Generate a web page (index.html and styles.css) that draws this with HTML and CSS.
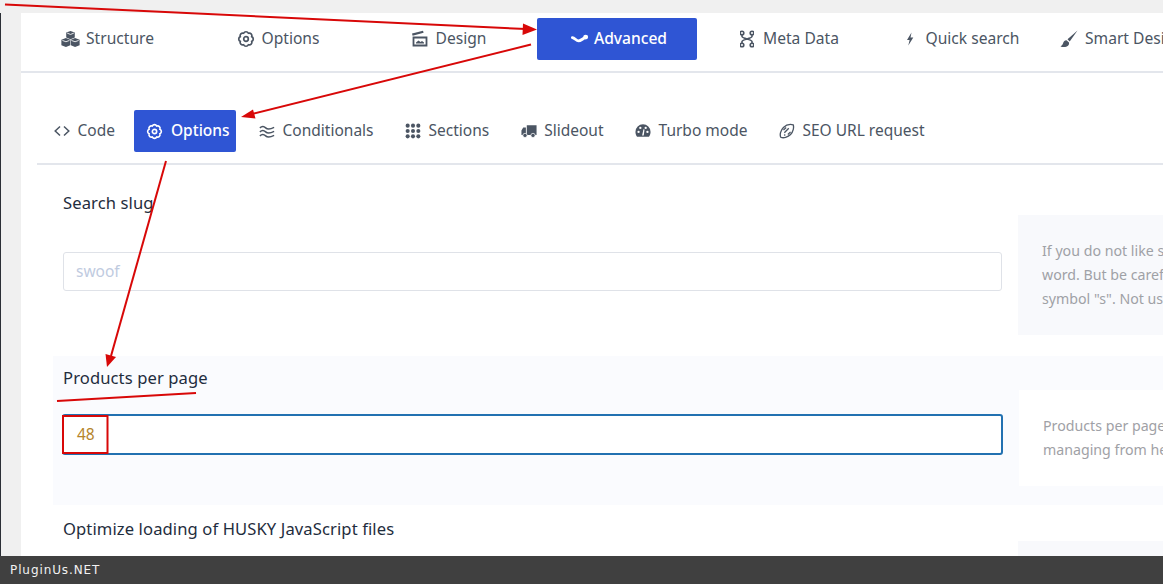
FILE: index.html
```html
<!DOCTYPE html>
<html lang="en">
<head>
<meta charset="utf-8">
<title>HUSKY options</title>
<link rel="stylesheet" href="styles.css">
</head>
<body>
<svg class="defs" width="0" height="0" aria-hidden="true">
  <symbol id="i-gear" viewBox="0 0 18 18">
    <path d="M14.730 6.630A2.600 2.600 0 0 1 14.730 11.370A2.600 2.600 0 0 1 11.370 14.730A2.600 2.600 0 0 1 6.630 14.730A2.600 2.600 0 0 1 3.270 11.370A2.600 2.600 0 0 1 3.270 6.630A2.600 2.600 0 0 1 6.630 3.270A2.600 2.600 0 0 1 11.370 3.270A2.600 2.600 0 0 1 14.730 6.630z" fill="none" stroke="currentColor" stroke-width="1.700"/>
    <circle cx="9" cy="9" r="2.300" fill="none" stroke="currentColor" stroke-width="1.700"/>
  </symbol>
</svg>

<div class="stage">
  <div class="strip"></div>
  <main class="panel">
    <nav class="tabs">
      <a class="tab">
        <svg class="ico ico-wide" viewBox="0 0 20 18"><path fill="currentColor" d="M10 .5l4.500 1.700v5.300L10 9.200 5.500 7.500V2.200zM5.200 8l4.600 1.800v5.900L5.200 17.500.4 15.700V9.800zM14.800 8l4.800 1.800v5.900l-4.800 1.800-4.400-1.800V9.800z"/><path fill="none" stroke="#fff" stroke-width=".9" d="M6.500 2.800l3.500 1.400 3.500-1.400M1.500 10.500l3.700 1.400 3.700-1.400M11 10.500l3.800 1.400 3.800-1.400"/></svg>
        <span class="tab-text tight">Structure</span>
      </a>
      <a class="tab"><svg class="ico"><use href="#i-gear"/></svg><span class="tab-text">Options</span></a>
      <a class="tab">
        <svg class="ico" viewBox="0 0 18 18"><path fill="none" stroke="currentColor" stroke-width="1.800" d="M2.500 7.500h13v8h-13z"/><path fill="currentColor" d="M1 3.500L12 .8l.6 2L1.600 5.800zM5 10h8v3.500H5z"/><path fill="#fff" d="M5 12.500l2.500-2 2 1.500 1.500-1 2 1.500V10H5z"/></svg>
        <span class="tab-text">Design</span>
      </a>
      <a class="tab active">
        <svg class="ico ico-wide" viewBox="0 0 20 18"><path fill="none" stroke="currentColor" stroke-width="3" stroke-linecap="round" d="M2.500 7.500c2.500.3 4 3.500 6.500 3.500 2 0 4-2 6-3"/><circle cx="16.500" cy="7" r="2.600" fill="currentColor"/></svg>
        <span class="tab-text tight">Advanced</span>
      </a>
      <a class="tab">
        <svg class="ico ico-narrow" viewBox="2 0 14 18"><g fill="none" stroke="currentColor" stroke-width="1.600"><circle cx="4" cy="3" r="1.800"/><circle cx="14" cy="3" r="1.800"/><circle cx="4" cy="15" r="1.800"/><circle cx="14" cy="15" r="1.800"/><path d="M4 5v1.500c0 2 10 3 10 5V13M14 5v1.500c0 2-10 3-10 5V13"/></g></svg>
        <span class="tab-text">Meta Data</span>
      </a>
      <a class="tab">
        <svg class="ico" viewBox="0 0 18 18"><path fill="currentColor" d="M10.500 2.500L6 10h2.600L7.300 15.500 12.300 7.500H9.500z"/></svg>
        <span class="tab-text">Quick search</span>
      </a>
      <a class="tab tab-last">
        <svg class="ico" viewBox="0 0 18 18"><path fill="currentColor" d="M17.500 .5L7.500 9.300l2.200 2.200zM6.500 10.200c-2.200.2-3 1.600-3.500 3.300-.3 1.100-1.200 2-2.500 3 2.500 1 6 .8 7.500-.8 1-1 1.200-2.100 1-3.200z"/></svg>
        <span class="tab-text">Smart Design</span>
      </a>
    </nav>

    <nav class="subtabs">
      <a class="subtab">
        <svg class="ico" viewBox="0 1 16 16"><path fill="none" stroke="currentColor" stroke-width="1.500" d="M6 4.500L1.200 9 6 13.500M10 4.500L14.800 9 10 13.500"/></svg>
        <span class="tab-text">Code</span>
      </a>
      <a class="subtab active"><svg class="ico"><use href="#i-gear"/></svg><span class="tab-text">Options</span></a>
      <a class="subtab">
        <svg class="ico" viewBox="0 0 18 18"><path fill="none" stroke="currentColor" stroke-width="1.700" d="M1 5.500c2.500-2.500 4.500-2 6.500 0s4.500 2 9.500-.5M1 10c2.500-2.500 4.500-2 6.500 0s4.500 2 9.500-.5M1 14.500c2.500-2.500 4.500-2 6.500 0s4.500 2 9.500-.5"/></svg>
        <span class="tab-text">Conditionals</span>
      </a>
      <a class="subtab">
        <svg class="ico" viewBox="0 0 18 18"><g fill="currentColor"><circle cx="3" cy="3" r="2.300"/><circle cx="9" cy="3" r="2.300"/><circle cx="15" cy="3" r="2.300"/><circle cx="3" cy="9" r="2.300"/><circle cx="9" cy="9" r="2.300"/><circle cx="15" cy="9" r="2.300"/><circle cx="3" cy="15" r="2.300"/><circle cx="9" cy="15" r="2.300"/><circle cx="15" cy="15" r="2.300"/></g></svg>
        <span class="tab-text">Sections</span>
      </a>
      <a class="subtab">
        <svg class="ico" viewBox="0 0 18 18"><path fill="currentColor" d="M6.500 2.500H17.500v11H6.500zM.5 8.500l2-3.500h3v8.500h-5z"/><g fill="currentColor" stroke="#fff" stroke-width=".8"><circle cx="4.500" cy="14" r="2.400"/><circle cx="13.500" cy="14" r="2.400"/></g></svg>
        <span class="tab-text">Slideout</span>
      </a>
      <a class="subtab">
        <svg class="ico" viewBox="0 0 18 18"><path fill="currentColor" d="M9 1.500a8.500 8.500 0 0 0-8.500 8.500c0 2 .7 3.800 1.800 5.500h13.400c1.100-1.700 1.800-3.500 1.800-5.500A8.500 8.500 0 0 0 9 1.500z"/><g fill="#fff"><circle cx="4" cy="10" r="1.300"/><circle cx="6" cy="5.500" r="1.300"/><circle cx="12" cy="5.500" r="1.300"/><circle cx="14" cy="10" r="1.300"/><path d="M8 14l1.500-7 1.200.3-.9 6.700z"/></g></svg>
        <span class="tab-text">Turbo mode</span>
      </a>
      <a class="subtab">
        <svg class="ico" viewBox="0 0 18 18"><g fill="none" stroke="currentColor" stroke-width="1.500"><path d="M2 16c-1.500-3 0-8 3-11s7-4 11-3c1 3 0 8-3 11s-8 4.500-11 3z"/><path d="M6 11l5-5M5 8l3-3M10 13l3-3M6 14l1-1"/></g></svg>
        <span class="tab-text">SEO URL request</span>
      </a>
    </nav>

    <section class="row row-slug">
      <div class="field">
        <label class="label">Search slug</label>
        <div class="input plain"><span class="placeholder">swoof</span></div>
      </div>
      <aside class="info info-slug">If you do not like search key 'swoof' you can change it here to any<br>word. But be careful: the word should not contain the<br>symbol "s". Not use underscore</aside>
    </section>

    <section class="row row-hl">
      <div class="field">
        <label class="label">Products per page</label>
        <div class="input focus"><span class="value">48</span></div>
      </div>
      <aside class="info info-pp">Products per page when searching is going only. Leave it empty for<br>managing from here</aside>
    </section>

    <section class="row row-last">
      <div class="field">
        <label class="label">Optimize loading of HUSKY JavaScript files</label>
      </div>
      <aside class="info info-last"></aside>
    </section>
  </main>

  <svg class="marks" viewBox="0 0 1163 556" aria-hidden="true">
    <g fill="none" stroke="#d80808" stroke-width="2">
      <path d="M5 4.500L526 29"/>
      <path d="M531 44.500L250 114.500"/>
      <path d="M166 161L111 356"/>
      <path d="M57 401L196 393"/>
      <rect x="63" y="416" width="44.500" height="37"/>
    </g>
    <g fill="#d80808">
      <path d="M537 29.500L523 23.500 522.500 35z"/>
      <path d="M241 117L253 109.500 255.500 118.500z"/>
      <path d="M107 367L105.500 354 116 357z"/>
    </g>
  </svg>
</div>

<footer class="footer">PluginUs.NET</footer>
</body>
</html>
```

FILE: styles.css
```css
* { box-sizing: border-box; }

html, body {
  margin: 0;
  height: 584px;
  overflow: hidden;
}

body {
  display: flex;
  flex-direction: column;
  font-family: "Noto Sans", "Open Sans", sans-serif;
  font-size: 15.500px;
  background: #f0f0f0;
}

.defs { position: absolute; }

.stage {
  position: relative;
  display: flex;
  height: 556px;
  overflow: hidden;
  padding-top: 13px;
}

.strip {
  flex: 0 0 21px;
  border-left: 1px solid #2b2f36;
}

.panel {
  flex: 0 0 1600px;
  background: #fff;
}

.marks {
  position: absolute;
  inset: 0;
  width: 1163px;
  height: 556px;
  pointer-events: none;
}

.tabs {
  display: flex;
  gap: 10.500px;
  height: 60px;
  padding: 5px 0 0 4.500px;
  border-bottom: 2px solid #e3e6ec;
  font-size: 15.600px;
}

.tab {
  flex: 0 0 160px;
  height: 42px;
  display: flex;
  align-items: center;
  justify-content: center;
  gap: 7px;
  padding-left: 4px;
  color: #4b5563;
  border-radius: 2px;
}

.tab.active {
  padding-left: 3px;
  gap: 6px;
}

.tab-last {
  padding: 0 13px 0 0;
}

.tab.active, .subtab.active {
  background: #2f55d4;
  color: #fff;
  font-weight: 500;
}

.tab-text { padding-bottom: 2px; }

.tight { margin-left: -1px; }

.ico {
  flex: none;
  width: 18px;
  height: 18px;
}

.ico-wide { width: 19px; }
.ico-narrow { width: 14px; margin-right: 2px; }

.subtabs {
  display: flex;
  align-items: flex-start;
  gap: 11.500px;
  height: 92px;
  margin-left: 16px;
  padding: 37px 0 0 5px;
  border-bottom: 2px solid #e3e6ec;
}

.subtab {
  height: 42px;
  display: flex;
  align-items: center;
  gap: 7.500px;
  padding: 0 8px 0 12px;
  color: #4b5563;
  border-radius: 2px;
}

.subtab.active {
  padding-right: 6px;
}

.subtab .ico {
  width: 16px;
  height: 16px;
}

.subtab.active .ico {
  width: 17px;
  height: 17px;
}

.row {
  display: flex;
  gap: 16px;
  margin-left: 32px;
  padding-left: 10px;
}

.row-slug {
  height: 191px;
  padding-top: 26px;
}

.row-hl {
  height: 149px;
  padding-top: 10px;
  background: #fafbfe;
}

.row-last {
  padding-top: 12px;
}

.field { flex: 0 0 939px; }

.label {
  display: block;
  color: #1f2d3d;
  font-size: 16.600px;
  letter-spacing: .1px;
  line-height: 24px;
}

.input {
  display: flex;
  align-items: center;
  background: #fff;
  border-radius: 3px;
}

.plain {
  height: 39px;
  margin-top: 37px;
  border: 1px solid #dfe2e8;
  padding: 0 0 2px 12px;
}

.placeholder { color: #bfcbdf; }

.focus {
  width: 941px;
  height: 41px;
  margin: 24px 0 0 -1px;
  border: 2px solid #2271b1;
  padding: 0 0 2px 13px;
}

.value { color: #b5842a; }

.info {
  flex: 0 0 560px;
  margin-top: 24px;
  padding: 24px;
  color: #9fa1a6;
  font-size: 14.200px;
  line-height: 24px;
  background: #f8f9fc;
}

.info-slug { height: 120px; }

.info-pp {
  height: 96px;
  background: #fff;
}

.info-last { height: 60px; }

.footer {
  height: 28px;
  flex: none;
  padding-left: 10px;
  background: #404040;
  color: #f2f2f2;
  font-family: "DejaVu Sans", sans-serif;
  font-size: 12px;
  letter-spacing: .9px;
  line-height: 28px;
}
```
